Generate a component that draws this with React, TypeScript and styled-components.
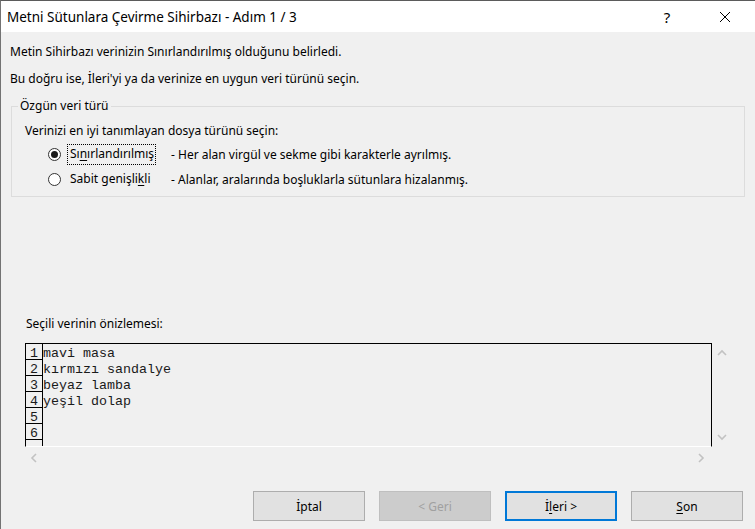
import styled, { createGlobalStyle } from "styled-components";

const GlobalStyle = createGlobalStyle`
  html, body {
    margin: 0;
    padding: 0;
    background: #f0f0f0;
    overflow: hidden;
  }
`;

const uiFont = `"Segoe UI", "Noto Sans", "Open Sans", sans-serif`;

const Window = styled.div`
  width: 755px;
  height: 529px;
  box-sizing: border-box;
  border-top: 1px solid #5b5b5b;
  border-left: 1px solid #737373;
  background: #f0f0f0;
  display: flex;
  flex-direction: column;
  font-family: ${uiFont};
  font-size: 12px;
  color: #000;
`;

const TitleBar = styled.div`
  height: 31px;
  background: #ffffff;
  display: flex;
  align-items: center;
  padding-left: 6px;
`;

const Title = styled.div`
  flex: 1;
  font-size: 13.5px;
  color: #000;
`;

const TitleButton = styled.div<{ $w: number }>`
  width: ${(p) => p.$w}px;
  height: 31px;
  display: flex;
  align-items: center;
  justify-content: center;
  font-size: 15px;
  color: #000;
`;

const Body = styled.div`
  flex: 1;
  display: flex;
  flex-direction: column;
  padding: 12px 0 0 9px;
`;

const Message = styled.p<{ $gap?: number }>`
  margin: 0 0 ${(p) => p.$gap ?? 0}px 0;
  line-height: 16px;
`;

const GroupBox = styled.fieldset`
  margin: 11px 0 0 1px;
  width: 734px;
  box-sizing: border-box;
  border: 1px solid #dcdcdc;
  padding: 9px 0 4px 13px;
  min-width: 0;
`;

const Legend = styled.legend`
  padding: 0 2px;
  margin-left: -7px;
  line-height: 16px;
`;

const Prompt = styled.div`
  line-height: 16px;
  margin-bottom: 3px;
`;

const OptionRow = styled.div`
  display: grid;
  grid-template-columns: 13px 98px 1fr;
  align-items: center;
  column-gap: 6px;
  height: 25px;
  padding-left: 23px;
`;

const RadioCircle = styled.span<{ $checked?: boolean }>`
  width: 13px;
  height: 13px;
  box-sizing: border-box;
  border: 1px solid #333333;
  border-radius: 50%;
  background: #ffffff;
  display: flex;
  align-items: center;
  justify-content: center;

  &::after {
    content: "";
    width: 7px;
    height: 7px;
    border-radius: 50%;
    background: ${(p) => (p.$checked ? "#1a1a1a" : "transparent")};
  }
`;

const OptionLabel = styled.span<{ $focused?: boolean }>`
  justify-self: start;
  padding: 1px 1px 2px 2px;
  border: 1px dotted ${(p) => (p.$focused ? "#000" : "transparent")};
  line-height: 16px;
`;

const Hint = styled.span`
  line-height: 16px;
`;

const Mnemonic = styled.u`
  text-underline-offset: 2px;
`;

const PreviewCaption = styled.div`
  margin: 119px 0 0 16px;
  line-height: 16px;
`;

const PreviewArea = styled.div`
  margin: 11px 0 0 15px;
  display: grid;
  grid-template-columns: 687px 19px;
  grid-template-rows: 104px 22px;
`;

const PreviewBox = styled.div`
  box-sizing: border-box;
  border: 1px solid #000;
  border-bottom-color: #ffffff;
  display: flex;
  overflow: hidden;
  font-family: "Liberation Mono", "Courier New", monospace;
  font-size: 13.33px;
  color: #1a1a1a;
`;

const NumberColumn = styled.div`
  width: 16px;
  border-right: 1px solid #000;
  display: flex;
  flex-direction: column;
`;

const NumberCell = styled.div`
  height: 15px;
  border-bottom: 1px solid #000;
  line-height: 20px;
  text-align: center;
  flex-shrink: 0;
  overflow: hidden;
`;

const Lines = styled.div`
  display: flex;
  flex-direction: column;
`;

const Line = styled.div`
  height: 16px;
  line-height: 20px;
  white-space: pre;
`;

const VScroll = styled.div`
  display: flex;
  flex-direction: column;
  justify-content: space-between;
  align-items: center;
  padding: 6px 0 6px 0;
`;

const HScroll = styled.div`
  display: flex;
  justify-content: space-between;
  align-items: center;
  padding: 0 7px 0 5px;
`;

const ButtonRow = styled.div`
  margin-top: 22px;
  display: flex;
  justify-content: flex-end;
  gap: 14px;
  padding-right: 12px;
`;

const Button = styled.button<{ $default?: boolean }>`
  width: 112px;
  height: 30px;
  box-sizing: border-box;
  font-family: ${uiFont};
  font-size: 12px;
  color: #000;
  background: #e1e1e1;
  border: ${(p) => (p.$default ? "2px solid #0078d7" : "1px solid #adadad")};
  padding: 0;

  &:disabled {
    background: #cccccc;
    border-color: #bfbfbf;
    color: #a0a0a0;
  }
`;

const Chevron = ({ dir }: { dir: "up" | "down" | "left" | "right" }) => {
  const paths = {
    up: "M1 6 L5 2 L9 6",
    down: "M1 2 L5 6 L9 2",
    left: "M6 1 L2 5 L6 9",
    right: "M2 1 L6 5 L2 9",
  };
  const vertical = dir === "up" || dir === "down";
  return (
    <svg
      width={vertical ? 10 : 8}
      height={vertical ? 8 : 10}
      viewBox={vertical ? "0 0 10 8" : "0 0 8 10"}
    >
      <path d={paths[dir]} fill="none" stroke="#c2c2c2" strokeWidth="1.6" />
    </svg>
  );
};

const previewLines = ["mavi masa", "kırmızı sandalye", "beyaz lamba", "yeşil dolap", "", ""];

export default function App() {
  return (
    <>
      <GlobalStyle />
      <Window>
        <TitleBar>
          <Title>Metni Sütunlara Çevirme Sihirbazı - Adım 1 / 3</Title>
          <TitleButton $w={56}>?</TitleButton>
          <TitleButton $w={60}>
            <svg width="12" height="12" viewBox="0 0 12 12">
              <path d="M1 1 L11 11 M11 1 L1 11" stroke="#000" strokeWidth="1" />
            </svg>
          </TitleButton>
        </TitleBar>
        <Body>
          <Message $gap={11}>Metin Sihirbazı verinizin Sınırlandırılmış olduğunu belirledi.</Message>
          <Message>Bu doğru ise, İleri'yi ya da verinize en uygun veri türünü seçin.</Message>
          <GroupBox>
            <Legend>Özgün veri türü</Legend>
            <Prompt>Verinizi en iyi tanımlayan dosya türünü seçin:</Prompt>
            <OptionRow>
              <RadioCircle $checked />
              <OptionLabel $focused>
                Sı<Mnemonic>n</Mnemonic>ırlandırılmış
              </OptionLabel>
              <Hint>- Her alan virgül ve sekme gibi karakterle ayrılmış.</Hint>
            </OptionRow>
            <OptionRow>
              <RadioCircle />
              <OptionLabel>
                Sabit genişli<Mnemonic>k</Mnemonic>li
              </OptionLabel>
              <Hint>- Alanlar, aralarında boşluklarla sütunlara hizalanmış.</Hint>
            </OptionRow>
          </GroupBox>
          <PreviewCaption>Seçili verinin önizlemesi:</PreviewCaption>
          <PreviewArea>
            <PreviewBox>
              <NumberColumn>
                {previewLines.map((_, i) => (
                  <NumberCell key={i}>{i + 1}</NumberCell>
                ))}
                <NumberCell />
              </NumberColumn>
              <Lines>
                {previewLines.map((l, i) => (
                  <Line key={i}>{l}</Line>
                ))}
              </Lines>
            </PreviewBox>
            <VScroll>
              <Chevron dir="up" />
              <Chevron dir="down" />
            </VScroll>
            <HScroll>
              <Chevron dir="left" />
              <Chevron dir="right" />
            </HScroll>
          </PreviewArea>
          <ButtonRow>
            <Button>İptal</Button>
            <Button disabled>&lt; Geri</Button>
            <Button $default>
              İ<Mnemonic>l</Mnemonic>eri &gt;
            </Button>
            <Button>
              <Mnemonic>S</Mnemonic>on
            </Button>
          </ButtonRow>
        </Body>
      </Window>
    </>
  );
}
